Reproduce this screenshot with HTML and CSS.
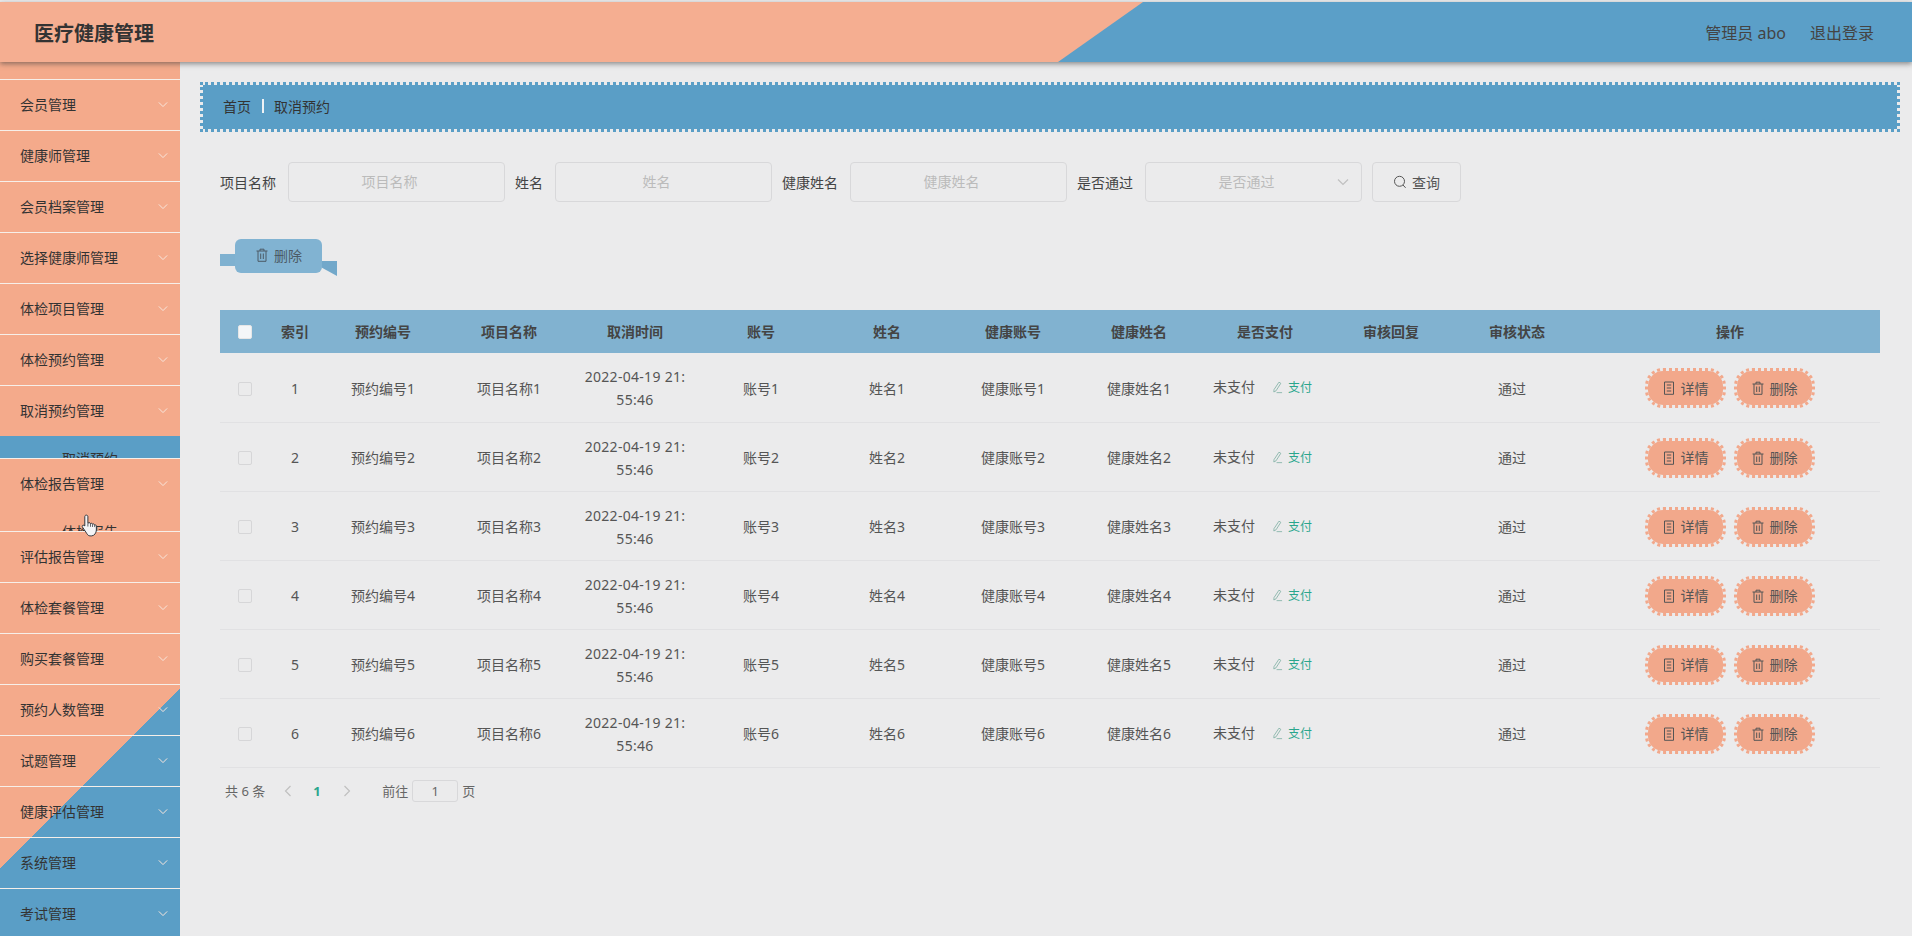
FILE: index.html
```html
<!DOCTYPE html>
<html lang="zh-CN">
<head>
    <meta charset="utf-8">
    <title>医疗健康管理</title>
    <link rel="stylesheet" href="styles.css">
</head>
<body>
<svg class="defs" width="0" height="0">
    <symbol id="i-down" viewBox="0 0 12 8"><polyline points="1,1.5 6,6.5 11,1.5" fill="none" stroke="currentColor" stroke-width="1.2"/></symbol>
    <symbol id="i-del" viewBox="0 0 14 14"><path d="M1.500 3h11M5 3V1.200h4V3M3 3v10.300h8V3M5.700 5.500v5.500M8.300 5.500v5.500" fill="none" stroke="currentColor" stroke-width="1"/></symbol>
    <symbol id="i-doc" viewBox="0 0 14 14"><path d="M2.500 1h9v12.300h-9zM4.800 4h4.400M4.800 7h4.400M4.800 10h4.400" fill="none" stroke="currentColor" stroke-width="1"/></symbol>
    <symbol id="i-edit" viewBox="0 0 12 14"><path d="M7.600 1.200l2 1.200-5.200 8.200-2.400 1.300.2-2.600zM5 12.600h6" fill="none" stroke="currentColor" stroke-width=".9"/></symbol>
    <symbol id="i-search" viewBox="0 0 14 14"><circle cx="6.500" cy="6.300" r="5" fill="none" stroke="currentColor"/><path d="M10 10l2.600 2.800" fill="none" stroke="currentColor"/></symbol>
</svg>

<!-- header -->
<div class="header">
    <div class="title">医疗健康管理</div>
    <div class="userbar">
        <span>管理员 abo</span>
        <span>退出登录</span>
    </div>
</div>

<div class="wrap">
    <!-- menu -->
    <div class="sidebar">
        <div class="menuitem"><span>会员管理</span><svg class="arrow"><use href="#i-down"/></svg></div>
        <div class="menuitem"><span>健康师管理</span><svg class="arrow"><use href="#i-down"/></svg></div>
        <div class="menuitem"><span>会员档案管理</span><svg class="arrow"><use href="#i-down"/></svg></div>
        <div class="menuitem"><span>选择健康师管理</span><svg class="arrow"><use href="#i-down"/></svg></div>
        <div class="menuitem"><span>体检项目管理</span><svg class="arrow"><use href="#i-down"/></svg></div>
        <div class="menuitem"><span>体检预约管理</span><svg class="arrow"><use href="#i-down"/></svg></div>
        <div class="menuitem"><span>取消预约管理</span><svg class="arrow"><use href="#i-down"/></svg></div>
        <div class="submenu on">取消预约</div>
        <div class="menuitem"><span>体检报告管理</span><svg class="arrow"><use href="#i-down"/></svg></div>
        <div class="submenu">体检报告</div>
        <div class="menuitem"><span>评估报告管理</span><svg class="arrow"><use href="#i-down"/></svg></div>
        <div class="menuitem"><span>体检套餐管理</span><svg class="arrow"><use href="#i-down"/></svg></div>
        <div class="menuitem"><span>购买套餐管理</span><svg class="arrow"><use href="#i-down"/></svg></div>
        <div class="menuitem"><span>预约人数管理</span><svg class="arrow"><use href="#i-down"/></svg></div>
        <div class="menuitem"><span>试题管理</span><svg class="arrow"><use href="#i-down"/></svg></div>
        <div class="menuitem"><span>健康评估管理</span><svg class="arrow"><use href="#i-down"/></svg></div>
        <div class="menuitem"><span>系统管理</span><svg class="arrow"><use href="#i-down"/></svg></div>
        <div class="menuitem"><span>考试管理</span><svg class="arrow"><use href="#i-down"/></svg></div>
        <svg class="cursor" viewBox="0 0 17 22">
            <path d="M5 1.200c1 0 1.500.7 1.500 1.600v6l1-.4c.8-.2 1.300.2 1.500.7.8-.4 1.500-.1 1.800.5.9-.4 1.700 0 1.900.8.9-.3 1.800.2 1.800 1.300v3.600c0 2.600-1.800 5.200-4.300 5.500H8.600c-1.400 0-2.200-.8-3-2L1.400 12.500c-.5-.8-.2-1.600.5-1.800.6-.2 1.300.1 1.700.7V2.800C3.600 1.900 4 1.200 5 1.200z" fill="#f4f4f6" stroke="#2b3038" stroke-width=".9"/>
            <path d="M6.500 9v3M9 9.200v3M10.900 9.800v2.600M12.900 10.500v2" fill="none" stroke="#2b3038" stroke-width=".7"/>
        </svg>
    </div>

    <div class="main">
        <!-- 面包屑 -->
        <div class="crumb">
            <span>首页</span><i class="sep"></i><span>取消预约</span>
        </div>

        <!-- 查询 -->
        <div class="searchbar">
            <label>项目名称</label><div class="field">项目名称</div>
            <label>姓名</label><div class="field">姓名</div>
            <label>健康姓名</label><div class="field">健康姓名</div>
            <label>是否通过</label><div class="field">是否通过<svg class="selarrow"><use href="#i-down"/></svg></div>
            <div class="btn-search"><svg class="ico"><use href="#i-search"/></svg>查询</div>
        </div>

        <div class="actions">
            <div class="btn-del"><svg class="ico"><use href="#i-del"/></svg>删除</div>
        </div>

        <table class="grid">
            <colgroup>
                <col class="c-50"><col class="c-50"><col span="10" class="c-126"><col class="c-300">
            </colgroup>
            <thead>
                <tr>
                    <th><i class="check head"></i></th>
                    <th>索引</th><th>预约编号</th><th>项目名称</th><th>取消时间</th><th>账号</th><th>姓名</th>
                    <th>健康账号</th><th>健康姓名</th><th>是否支付</th><th>审核回复</th><th>审核状态</th><th>操作</th>
                </tr>
            </thead>
            <tbody>
                <tr>
                    <td><i class="check"></i></td><td>1</td><td>预约编号1</td><td>项目名称1</td><td class="time">2022-04-19 21:55:46</td>
                    <td>账号1</td><td>姓名1</td><td>健康账号1</td><td>健康姓名1</td>
                    <td class="pay">未支付<a class="paylink"><svg class="ico-s"><use href="#i-edit"/></svg>支付</a></td>
                    <td></td><td class="state">通过</td>
                    <td><div class="ops"><div class="btn-op"><svg class="ico"><use href="#i-doc"/></svg>详情</div><div class="btn-op"><svg class="ico"><use href="#i-del"/></svg>删除</div></div></td>
                </tr>
                <tr>
                    <td><i class="check"></i></td><td>2</td><td>预约编号2</td><td>项目名称2</td><td class="time">2022-04-19 21:55:46</td>
                    <td>账号2</td><td>姓名2</td><td>健康账号2</td><td>健康姓名2</td>
                    <td class="pay">未支付<a class="paylink"><svg class="ico-s"><use href="#i-edit"/></svg>支付</a></td>
                    <td></td><td class="state">通过</td>
                    <td><div class="ops"><div class="btn-op"><svg class="ico"><use href="#i-doc"/></svg>详情</div><div class="btn-op"><svg class="ico"><use href="#i-del"/></svg>删除</div></div></td>
                </tr>
                <tr>
                    <td><i class="check"></i></td><td>3</td><td>预约编号3</td><td>项目名称3</td><td class="time">2022-04-19 21:55:46</td>
                    <td>账号3</td><td>姓名3</td><td>健康账号3</td><td>健康姓名3</td>
                    <td class="pay">未支付<a class="paylink"><svg class="ico-s"><use href="#i-edit"/></svg>支付</a></td>
                    <td></td><td class="state">通过</td>
                    <td><div class="ops"><div class="btn-op"><svg class="ico"><use href="#i-doc"/></svg>详情</div><div class="btn-op"><svg class="ico"><use href="#i-del"/></svg>删除</div></div></td>
                </tr>
                <tr>
                    <td><i class="check"></i></td><td>4</td><td>预约编号4</td><td>项目名称4</td><td class="time">2022-04-19 21:55:46</td>
                    <td>账号4</td><td>姓名4</td><td>健康账号4</td><td>健康姓名4</td>
                    <td class="pay">未支付<a class="paylink"><svg class="ico-s"><use href="#i-edit"/></svg>支付</a></td>
                    <td></td><td class="state">通过</td>
                    <td><div class="ops"><div class="btn-op"><svg class="ico"><use href="#i-doc"/></svg>详情</div><div class="btn-op"><svg class="ico"><use href="#i-del"/></svg>删除</div></div></td>
                </tr>
                <tr>
                    <td><i class="check"></i></td><td>5</td><td>预约编号5</td><td>项目名称5</td><td class="time">2022-04-19 21:55:46</td>
                    <td>账号5</td><td>姓名5</td><td>健康账号5</td><td>健康姓名5</td>
                    <td class="pay">未支付<a class="paylink"><svg class="ico-s"><use href="#i-edit"/></svg>支付</a></td>
                    <td></td><td class="state">通过</td>
                    <td><div class="ops"><div class="btn-op"><svg class="ico"><use href="#i-doc"/></svg>详情</div><div class="btn-op"><svg class="ico"><use href="#i-del"/></svg>删除</div></div></td>
                </tr>
                <tr>
                    <td><i class="check"></i></td><td>6</td><td>预约编号6</td><td>项目名称6</td><td class="time">2022-04-19 21:55:46</td>
                    <td>账号6</td><td>姓名6</td><td>健康账号6</td><td>健康姓名6</td>
                    <td class="pay">未支付<a class="paylink"><svg class="ico-s"><use href="#i-edit"/></svg>支付</a></td>
                    <td></td><td class="state">通过</td>
                    <td><div class="ops"><div class="btn-op"><svg class="ico"><use href="#i-doc"/></svg>详情</div><div class="btn-op"><svg class="ico"><use href="#i-del"/></svg>删除</div></div></td>
                </tr>
            </tbody>
        </table>

        <!-- 分页 -->
        <div class="pager">
            <span class="total">共 6 条</span>
            <svg class="prev"><use href="#i-down"/></svg>
            <span class="cur">1</span>
            <svg class="next"><use href="#i-down"/></svg>
            <span class="goto">前往</span><div class="pageinput">1</div><span>页</span>
        </div>
    </div>
</div>
</body>
</html>
```

FILE: styles.css
```css
html,body{margin:0;padding:0;height:936px;overflow:hidden;}
body{background:#ebebec;padding-top:2px;box-sizing:border-box;font-family:"Noto Sans","Noto Sans CJK SC",sans-serif;font-size:14px;color:#555;}
.defs{position:absolute;}
i{font-style:normal;}

.header{height:60px;display:flex;align-items:center;justify-content:space-between;background:#5b9fc8;position:relative;z-index:5;box-shadow:0 2px 5px rgba(60,60,60,.55);}
.header:before{content:"";position:absolute;left:0;top:0;bottom:0;width:1143px;background:#f5ae91;clip-path:polygon(0 0,100% 0,1058px 100%,0 100%);}
.title{position:relative;margin-left:34px;font-size:20px;font-weight:bold;color:#333;}
.userbar{position:relative;display:flex;gap:24px;margin-right:38px;font-size:16px;color:#444;}

.wrap{display:flex;height:874px;}
.sidebar{position:relative;width:180px;flex:none;padding-top:17px;box-sizing:border-box;overflow:hidden;background:linear-gradient(135deg,#f4aa8b 76.5%,#5a9ec6 76.5%);}
.menuitem{display:flex;align-items:center;justify-content:space-between;height:48px;padding:0 12px 2px 20px;border-top:1px solid #f6efe9;color:#333;}
.arrow{width:10px;height:7px;color:#f7e6dc;}
.submenu{height:22px;line-height:46px;overflow:hidden;padding-left:62px;color:#333;}
.submenu.on{background:#5a9ec6;}
.cursor{position:absolute;left:81px;top:451px;width:18px;height:25px;}

.main{flex:1;min-width:0;padding:20px 32px 0 20px;}
.crumb{display:flex;align-items:center;height:42px;margin-right:-20px;padding:0 0 2px 20px;border:3px dotted #5a9ec6;background:#5a9ec6;background-clip:padding-box;color:#333;}
.crumb .sep{width:2px;height:14px;margin:0 10px 0 11px;background:#eef2f5;}

.searchbar{display:flex;align-items:center;height:40px;margin:30px 0 0 20px;}
.searchbar label{margin:0 12px 0 0;color:#444;}
.field{width:201px;height:38px;line-height:38px;margin-right:10px;padding-right:14px;border:1px solid #d8d8da;border-radius:4px;text-align:center;color:#bbb;position:relative;}
.selarrow{position:absolute;right:12px;top:15px;width:12px;height:8px;color:#c0c0c0;}
.btn-search{display:flex;align-items:center;justify-content:center;width:87px;height:38px;border:1px solid #d8d8da;border-radius:4px;color:#555;}
.ico{width:14px;height:14px;margin-right:5px;}

.actions{height:108px;margin-left:20px;box-sizing:border-box;padding-top:37px;}
.btn-del{position:relative;display:flex;align-items:center;justify-content:center;width:87px;height:32px;padding-bottom:2px;margin-left:15px;border-radius:6px;background:#81b3d2;color:#4c5a66;}
.btn-del:before{content:"";position:absolute;left:-15px;top:15px;width:15px;height:12px;background:#7fb1d0;}
.btn-del:after{content:"";position:absolute;right:-15px;top:22px;width:15px;height:15px;background:#72a8ca;clip-path:polygon(0 0,100% 0,100% 100%,0 45%);}

.grid{table-layout:fixed;border-collapse:collapse;width:1660px;margin-left:20px;}
.c-50{width:50px;}
.c-126{width:126px;}
.c-300{width:300px;}
.grid th{height:43px;padding:0 0 2px;box-sizing:border-box;background:#81b2d0;font-weight:bold;color:#444;text-align:center;}
.grid td{height:69px;padding:2px 10px 0;box-sizing:border-box;border-bottom:1px solid #e1e1e3;text-align:center;line-height:23px;}
.grid td:first-child{padding:0;}
.grid td.time{padding:2px 12px 0;word-break:break-all;letter-spacing:.3px;}
.check{display:inline-block;width:12px;height:12px;border:1px solid #d6d6d8;border-radius:2px;vertical-align:middle;}
.check.head{background:#f4f6f8;border-color:#e6e6e6;}
.grid td.pay{padding:0 5px 0 0;white-space:nowrap;}
.paylink{display:inline-flex;align-items:center;margin-left:17px;font-size:12px;color:#2aa68c;vertical-align:-2px;}
.ico-s{width:11px;height:13px;margin-right:5px;color:#7fb0a4;}
.grid td.state{padding:2px 20px 0 10px;}
.ops{display:flex;justify-content:center;gap:8px;padding-right:1px;}
.btn-op{display:flex;align-items:center;justify-content:center;width:75px;height:34px;border:3px dotted #f2a88b;border-radius:18px;background:#f2a88b;background-clip:padding-box;color:#555;}

.pager{display:flex;align-items:center;height:24px;margin:11px 0 0 25px;font-size:13px;color:#666;}
.prev,.next{width:12px;height:8px;color:#c0c0c0;}
.prev{transform:rotate(90deg);margin:0 19px 0 17px;}
.next{transform:rotate(-90deg);margin:0 29px 0 21px;}
.cur{width:7px;text-align:center;font-weight:bold;color:#2aa68c;}
.goto{margin-right:4px;}
.pageinput{width:44px;height:20px;line-height:20px;margin-right:4px;border:1px solid #d8d8da;border-radius:3px;text-align:center;}
```
